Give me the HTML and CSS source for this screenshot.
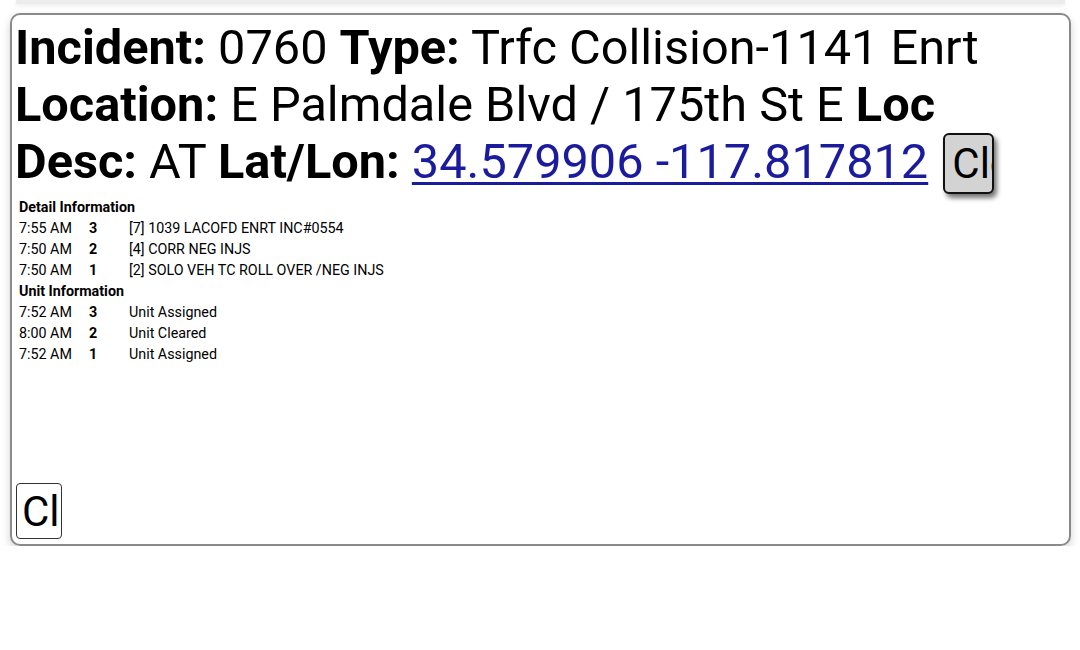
FILE: index.html
```html
<!DOCTYPE html>
<html>
<head>
<meta charset="utf-8">
<link rel="stylesheet" href="styles.css">
</head>
<body>
<div class="prev"></div>
<div class="card">
  <div class="head">
    <b>Incident:</b> 0760 <b>Type:</b> Trfc Collision-1141 Enrt <b>Location:</b> E Palmdale Blvd / 175th St E <b>Loc Desc:</b> AT <b>Lat/Lon:</b> <a class="link" href="#">34.579906 -117.817812</a> <button class="btn-top">Close</button>
  </div>
  <div class="info">
    <div class="sect">Detail Information</div>
    <div class="row"><span class="t">7:55 AM</span><span class="n">3</span><span class="d">[7] 1039 LACOFD ENRT INC#0554</span></div>
    <div class="row"><span class="t">7:50 AM</span><span class="n">2</span><span class="d">[4] CORR NEG INJS</span></div>
    <div class="row"><span class="t">7:50 AM</span><span class="n">1</span><span class="d">[2] SOLO VEH TC ROLL OVER /NEG INJS</span></div>
    <div class="sect">Unit Information</div>
    <div class="row"><span class="t">7:52 AM</span><span class="n">3</span><span class="d">Unit Assigned</span></div>
    <div class="row"><span class="t">8:00 AM</span><span class="n">2</span><span class="d">Unit Cleared</span></div>
    <div class="row"><span class="t">7:52 AM</span><span class="n">1</span><span class="d">Unit Assigned</span></div>
  </div>
  <button class="btn-bottom">Close</button>
</div>
</body>
</html>
```
FILE: styles.css
```css
html, body {
  margin: 0;
  padding: 0;
  background: #fff;
}
body {
  font-family: Roboto, "Liberation Sans", sans-serif;
  color: #000;
  padding: 0 9px 0 10px;
}
.prev {
  height: 4px;
  margin: 0 6px;
  background: #ececec;
  box-shadow: 0 2px 4px rgba(0,0,0,0.08);
  margin-bottom: 9px;
}
.card {
  height: 524px;
  border: 2px solid #8a8a8a;
  border-radius: 10px;
  box-shadow: 0 4px 8px rgba(0,0,0,0.18);
  display: flex;
  flex-direction: column;
  padding: 0 3px 5px 3px;
}
.head {
  font-size: 48.7px;
  line-height: 57px;
  padding-top: 4px;
}
.head b { font-weight: 700; }
.link {
  color: #1b1b9e;
  text-decoration: underline;
  text-decoration-thickness: 3px;
  text-underline-offset: 4px;
}
.btn-top {
  display: inline-block;
  vertical-align: top;
  margin-bottom: -4px;
  width: 51px;
  height: 61px;
  overflow: hidden;
  white-space: nowrap;
  text-align: left;
  font-family: Roboto, "Liberation Sans", sans-serif;
  font-size: 42px;
  padding: 0 0 0 7px;
  background: #d3d3d3;
  border: 2px solid #111;
  border-radius: 6px;
  box-shadow: 3px 4px 5px rgba(0,0,0,0.55);
  color: #000;
  margin-left: 3px;
}
.info {
  margin-top: 7px;
  font-size: 14.3px;
  line-height: 21px;
  padding-left: 4px;
}
.sect { font-weight: 700; }
.row { display: flex; }
.t { width: 70px; }
.n { width: 40px; font-weight: 700; }
.btn-bottom {
  margin-top: auto;
  align-self: flex-start;
  width: 46px;
  height: 56px;
  overflow: hidden;
  white-space: nowrap;
  text-align: left;
  font-family: Roboto, "Liberation Sans", sans-serif;
  font-size: 42px;
  padding: 0 0 0 5px;
  background: #fff;
  border: 1px solid #333;
  border-radius: 4px;
  color: #000;
  margin-left: 1px;
}
```
